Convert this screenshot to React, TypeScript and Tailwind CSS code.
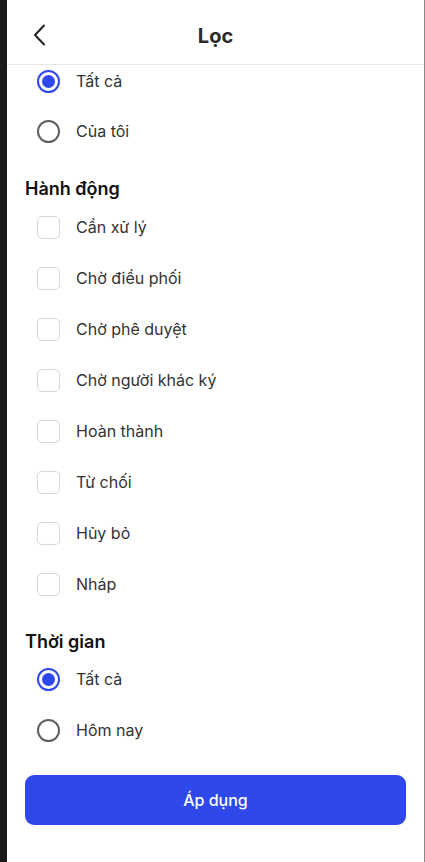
import React from "react";

const font = { fontFamily: "Inter, 'Noto Sans', sans-serif" };

function Radio({ checked, label }: { checked?: boolean; label: string }) {
  return (
    <div className="flex h-[30px] items-center">
      <div className="ml-[30px] flex h-[23px] w-[23px] items-center justify-center">
        <div
          className={
            checked
              ? "flex h-[23px] w-[23px] items-center justify-center rounded-full border-2 border-[#2f48ec]"
              : "h-[23px] w-[23px] rounded-full border-2 border-[#5f5f5f]"
          }
        >
          {checked && <div className="h-[13px] w-[13px] rounded-full bg-[#2f48ec]" />}
        </div>
      </div>
      <span className="ml-[16px] text-[16px] text-[#333333]">{label}</span>
    </div>
  );
}

function Check({ label }: { label: string }) {
  return (
    <div className="flex h-[30px] items-center">
      <div className="ml-[30px] h-[23px] w-[23px] rounded-[5px] border-[1.5px] border-[#d6d6d6]" />
      <span className="ml-[16px] text-[16px] text-[#333333]">{label}</span>
    </div>
  );
}

export default function App() {
  const actions = [
    "Cần xử lý",
    "Chờ điều phối",
    "Chờ phê duyệt",
    "Chờ người khác ký",
    "Hoàn thành",
    "Từ chối",
    "Hủy bỏ",
    "Nháp",
  ];
  return (
    <div className="flex h-[862px] w-full overflow-hidden bg-[#1a1a1a]" style={font}>
      <div className="w-[7px] shrink-0 bg-[#1a1a1a]" />
      <div className="flex flex-1 flex-col bg-white">
        <div className="relative flex h-[65px] shrink-0 items-center justify-center border-b border-[#e6e6e6]">
          <svg
            className="absolute left-[21px] top-[24px]"
            width="22"
            height="22"
            viewBox="0 0 22 22"
            fill="none"
            stroke="#222"
            strokeWidth="2"
            strokeLinecap="round"
            strokeLinejoin="round"
          >
            <path d="M16 1.5 L7 11 L16 20.5" />
          </svg>
          <span className="mt-[7px] text-[20px] font-bold text-[#2a2a2a]">Lọc</span>
        </div>
        <div className="flex flex-col">
          <div className="mt-[1px] flex flex-col gap-[20px]">
            <Radio checked label="Tất cả" />
            <Radio label="Của tôi" />
          </div>
          <div className="mt-[28px] flex h-[28px] items-center pl-[18px] text-[18px] font-semibold text-[#111]">
            Hành động
          </div>
          <div className="mt-[10px] flex flex-col gap-[21px]">
            {actions.map((a) => (
              <Check key={a} label={a} />
            ))}
          </div>
          <div className="mt-[28px] flex h-[28px] items-center pl-[18px] text-[18px] font-semibold text-[#111]">
            Thời gian
          </div>
          <div className="mt-[9px] flex flex-col gap-[21px]">
            <Radio checked label="Tất cả" />
            <Radio label="Hôm nay" />
          </div>
          <div className="mt-[30px] px-[18px]">
            <button className="flex h-[50px] w-full items-center justify-center rounded-[9px] bg-[#2f48ec] text-[16px] font-medium text-white">
              Áp dụng
            </button>
          </div>
        </div>
      </div>
      <div className="w-[1px] shrink-0 bg-[#8a8a8a]" />
    </div>
  );
}
